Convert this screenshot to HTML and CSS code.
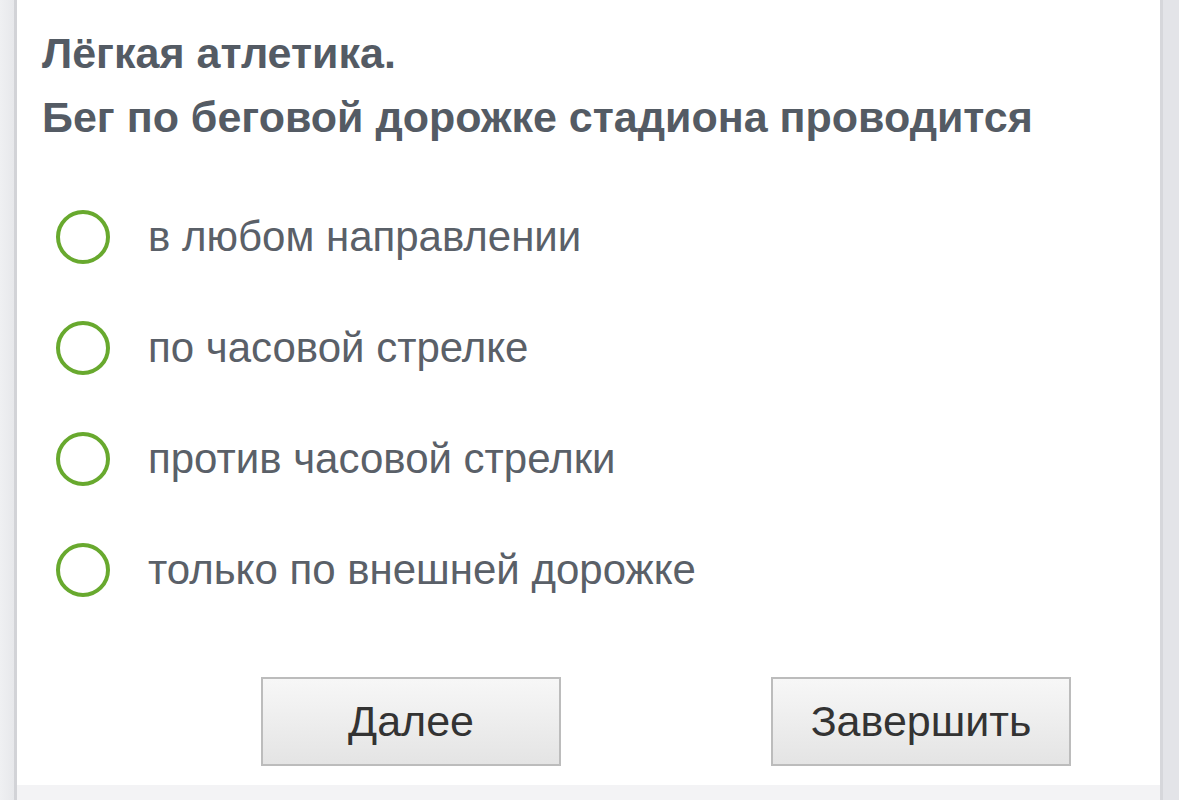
FILE: index.html
```html
<!DOCTYPE html>
<html lang="ru">
<head>
<meta charset="utf-8">
<link rel="stylesheet" href="styles.css">
</head>
<body>
<div class="page">
  <div class="side side-left"></div>
  <main class="card">
    <div class="content">
      <h1 class="question">
        <span class="q-line">Лёгкая атлетика.</span>
        <span class="q-line">Бег по беговой дорожке стадиона проводится</span>
      </h1>
      <ul class="options">
        <li class="option"><span class="radio"></span><span class="opt-text">в любом направлении</span></li>
        <li class="option"><span class="radio"></span><span class="opt-text">по часовой стрелке</span></li>
        <li class="option"><span class="radio"></span><span class="opt-text">против часовой стрелки</span></li>
        <li class="option"><span class="radio"></span><span class="opt-text">только по внешней дорожке</span></li>
      </ul>
      <div class="actions">
        <button class="btn">Далее</button>
        <button class="btn">Завершить</button>
      </div>
    </div>
    <div class="footer"></div>
  </main>
  <div class="side side-right"></div>
</div>
</body>
</html>
```
FILE: styles.css
```css
* { box-sizing: border-box; }
html, body {
  margin: 0;
  padding: 0;
  height: 800px;
  overflow: hidden;
  background: #eeeff1;
  font-family: "Liberation Sans", Arial, sans-serif;
}
.page {
  display: flex;
  height: 800px;
}
.side-left {
  width: 17px;
  border-right: 3px solid #d2d3d7;
  background: linear-gradient(to right, #eff0f2, #e7e8eb);
}
.side-right {
  width: 19px;
  border-left: 3px solid #d6d7db;
  background: #e3e4e8;
}
.card {
  flex: 1;
  background: #ffffff;
  display: flex;
  flex-direction: column;
}
.content {
  height: 785px;
  padding: 21px 25px 0 25px;
}
.footer {
  flex: 1;
  background: #f3f3f5;
}
.question {
  margin: 0;
  font-size: 43px;
  font-weight: bold;
  color: #545b64;
  line-height: 64px;
}
.q-line { display: block; }
.options {
  list-style: none;
  margin: 32px 0 0 0;
  padding: 0 0 0 14px;
}
.option {
  display: flex;
  align-items: center;
  height: 111px;
}
.radio {
  width: 54px;
  height: 54px;
  border: 4px solid #68a92e;
  border-radius: 50%;
  flex: none;
}
.opt-text {
  margin-left: 38px;
  font-size: 42px;
  color: #5a6068;
}
.actions {
  display: flex;
  gap: 210px;
  padding-left: 219px;
  margin-top: 52px;
}
.btn {
  width: 300px;
  height: 89px;
  border: 2px solid #bcbcbc;
  background: linear-gradient(to bottom, #f7f7f7, #e4e4e4);
  font-family: "Liberation Sans", Arial, sans-serif;
  font-size: 43px;
  color: #333333;
  padding: 0;
}
```
